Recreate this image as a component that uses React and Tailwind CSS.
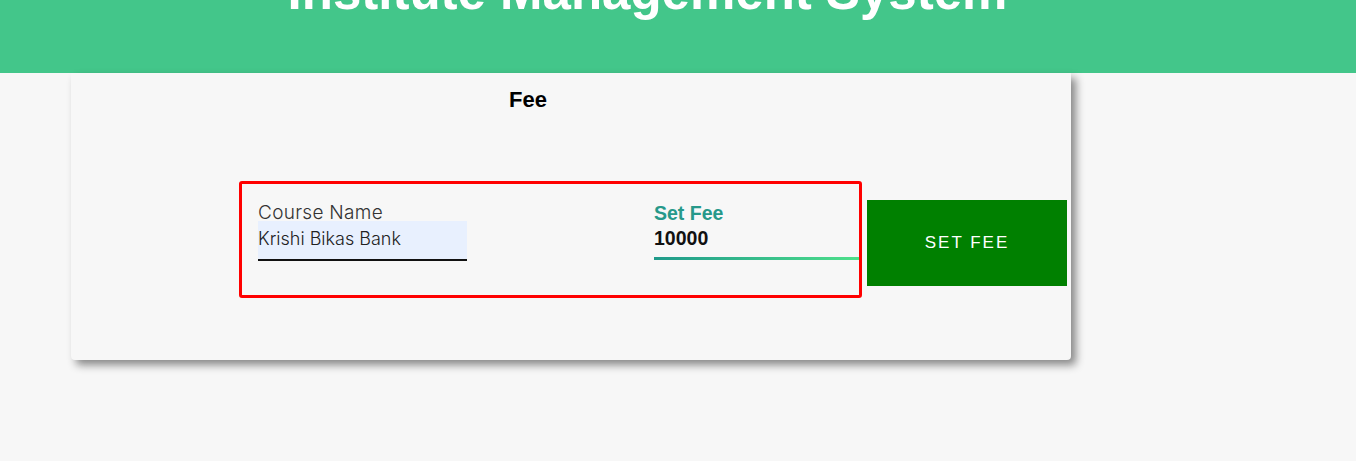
export default function App() {
  return (
    <div className="min-h-[461px] bg-[#f7f7f7] font-['Inter','Liberation_Sans',sans-serif]">
      {/* Header (page scrolled so title is clipped) */}
      <header className="h-[73px] bg-[#43c68a] overflow-hidden flex justify-center pr-[61px]">
        <h1 className="mt-[-40px] text-[51px] leading-[64px] font-bold text-white whitespace-nowrap font-['Liberation_Sans',sans-serif]">
          Institute Management System
        </h1>
      </header>

      {/* Card */}
      <div className="ml-[71px] w-[1000px] h-[287px] bg-[#f7f7f7] rounded-b-[4px] shadow-[5px_5px_8px_rgba(0,0,0,0.45)]">
        <div className="pt-[15px] pl-[438px] text-[22px] leading-[24px] font-bold text-black font-['Liberation_Sans',sans-serif]">
          Fee
        </div>

        <div className="mt-[69px] ml-[168px] flex items-start">
          <div className="w-[623px] h-[117px] border-[3px] border-[#ff0000] rounded-[3px] flex justify-between pl-[16px] pt-[19px]">
            {/* Course Name */}
            <div className="w-[209px]">
              <div className="text-[19px] leading-[20px] font-light text-[#333] tracking-[0.3px]">
                Course Name
              </div>
              <div className="mt-[-2px] h-[40px] bg-[#e8f0fe] border-b-2 border-[#111] flex items-center text-[18px] font-light text-[#222]">
                <span className="-mt-[4px]">Krishi Bikas Bank</span>
              </div>
            </div>

            {/* Set Fee */}
            <div className="w-[205px]">
              <div className="text-[19.5px] leading-[20px] font-bold text-[#26998a] font-['Liberation_Sans',sans-serif]">
                Set Fee
              </div>
              <div className="mt-[5px] text-[19.5px] leading-[20px] font-bold text-[#111] font-['Liberation_Sans',sans-serif]">
                10000
              </div>
              <div className="mt-[9px] h-[3px] bg-gradient-to-r from-[#1f9a8a] to-[#4ee08a]" />
            </div>
          </div>

          <button className="ml-[5px] mt-[19px] w-[200px] h-[86px] bg-[#008000] text-white text-[17px] tracking-[2px] font-['Liberation_Sans',sans-serif]">
            SET FEE
          </button>
        </div>
      </div>
    </div>
  );
}
